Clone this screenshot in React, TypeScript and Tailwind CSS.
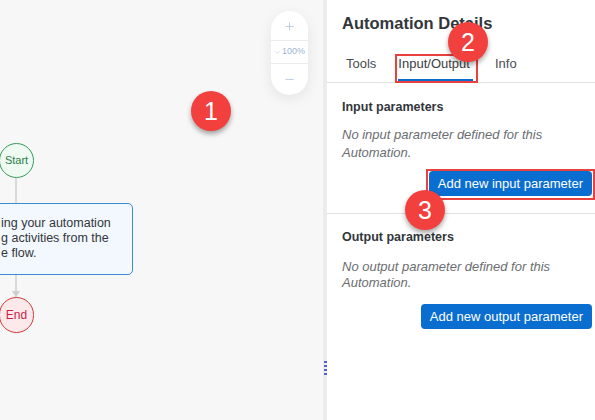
import { Plus, Minus, ChevronDown } from "lucide-react";

function Badge({ n, className }: { n: string; className: string }) {
  return (
    <div
      className={`absolute w-[40px] h-[40px] rounded-full bg-[#f2403f] text-white flex items-center justify-center text-[25px] leading-none shadow-[0_3px_5px_rgba(0,0,0,0.35)] z-20 ${className}`}
    >
      {n}
    </div>
  );
}

function Canvas() {
  return (
    <div className="relative flex-1 h-full overflow-hidden bg-[#f7f7f7]">
      {/* zoom control */}
      <div className="absolute left-[271px] top-[11px] w-[37px] h-[84px] rounded-full bg-white shadow-[0_4px_14px_rgba(0,0,0,0.08)] flex flex-col items-center text-[#9db5d6]">
        <div className="h-[30px] w-full flex items-center justify-center pt-[2px] border-b border-[#ececec]">
          <Plus className="w-[13px] h-[13px]" strokeWidth={1.2} />
        </div>
        <div className="h-[23px] w-full flex items-center justify-center gap-[1px] text-[9px] border-b border-[#ececec]">
          <ChevronDown className="w-[7px] h-[7px]" strokeWidth={1.5} />
          <span>100%</span>
        </div>
        <div className="flex-1 w-full flex items-center justify-center">
          <Minus className="w-[13px] h-[13px]" strokeWidth={1.2} />
        </div>
      </div>

      {/* flow */}
      <div className="absolute left-[15px] top-[177px] w-[2px] h-[120px] bg-[#d9d9d9]" />
      <div className="absolute left-[12px] top-[291px] w-0 h-0 border-l-[4px] border-r-[4px] border-t-[6px] border-l-transparent border-r-transparent border-t-[#cfcfcf]" />
      <div className="absolute left-[-1px] top-[143px] w-[35px] h-[35px] rounded-full border border-[#3a9a5c] bg-[#eefaf2] flex items-center justify-center text-[11px] text-[#2b7d4b]">
        Start
      </div>
      <div className="absolute left-[-8px] top-[203px] w-[141px] h-[72px] rounded-[5px] border border-[#3d8ad6] bg-[#f3f8fe] pl-[8px] pt-[12px] text-[12.5px] leading-[15px] text-[#32363a]">
        <div>ing your automation</div>
        <div>g activities from the</div>
        <div>e flow.</div>
      </div>
      <div className="absolute left-[-1px] top-[297px] w-[35px] h-[36px] rounded-full border border-[#d23a3a] bg-[#fde9ea] flex items-center justify-center text-[12px] text-[#c81e4a]">
        End
      </div>
    </div>
  );
}

export default function App() {
  return (
    <div
      className="relative flex w-[595px] h-[420px] overflow-hidden bg-white"
      style={{ fontFamily: "'Liberation Sans', Arial, sans-serif" }}
    >
      <Canvas />

      {/* splitter */}
      <div className="relative w-[4px] h-full bg-[#ececec]">
        <div className="absolute left-[1px] top-[361px] flex flex-col gap-[2px]">
          <div className="w-[3px] h-[2px] bg-[#5a5fc8]" />
          <div className="w-[3px] h-[2px] bg-[#5a5fc8]" />
          <div className="w-[3px] h-[2px] bg-[#5a5fc8]" />
          <div className="w-[3px] h-[2px] bg-[#5a5fc8]" />
        </div>
      </div>

      {/* details panel */}
      <div className="w-[268px] h-full bg-white flex flex-col text-[#32363a]">
        <div className="px-[15px] pt-[13px] h-[37px] text-[16.5px] leading-[20px] font-bold">Automation Details</div>
        <div className="flex items-end h-[46px] border-b border-[#e2e2e2] pl-[19px] text-[13px] leading-[16px] text-[#4a4d52]">
          <div className="pb-[10px] mr-[22px]">Tools</div>
          <div className="pb-[7px] mb-[1px] mr-[22px] pr-[3px] text-[#3a3d42] border-b-2 border-[#0a6ed1]">Input/Output</div>
          <div className="pb-[10px]">Info</div>
        </div>

        <div className="h-[131px] border-b border-[#e2e2e2] px-[15px] pt-[15px]">
          <div className="text-[12.5px] leading-[18px] font-bold">Input parameters</div>
          <div className="mt-[10px] text-[13px] italic leading-[18px] text-[#6a6d70]">
            No input parameter defined for this
            <br />
            Automation.
          </div>
          <div className="flex justify-end mt-[9px] -mr-[12px]">
            <div className="h-[25px] px-[9px] rounded-[4px] bg-[#0a6ed1] text-white text-[13px] flex items-center">
              Add new input parameter
            </div>
          </div>
        </div>

        <div className="px-[15px] pt-[14px]">
          <div className="text-[12.5px] leading-[18px] font-bold">Output parameters</div>
          <div className="mt-[13px] text-[13px] italic leading-[16px] text-[#6a6d70]">
            No output parameter defined for this
            <br />
            Automation.
          </div>
          <div className="flex justify-end mt-[13px] -mr-[12px]">
            <div className="h-[25px] px-[9px] rounded-[4px] bg-[#0a6ed1] text-white text-[13px] flex items-center">
              Add new output parameter
            </div>
          </div>
        </div>
      </div>

      {/* annotation frames */}
      <div className="absolute left-[395px] top-[54px] w-[83px] h-[29px] border-2 border-[#e8413f] z-10" />
      <div className="absolute left-[426px] top-[169px] w-[169px] h-[31px] border-2 border-[#e8413f] z-10" />

      <Badge n="1" className="left-[191px] top-[91px]" />
      <Badge n="2" className="left-[448px] top-[22px]" />
      <Badge n="3" className="left-[405px] top-[190px]" />
    </div>
  );
}
